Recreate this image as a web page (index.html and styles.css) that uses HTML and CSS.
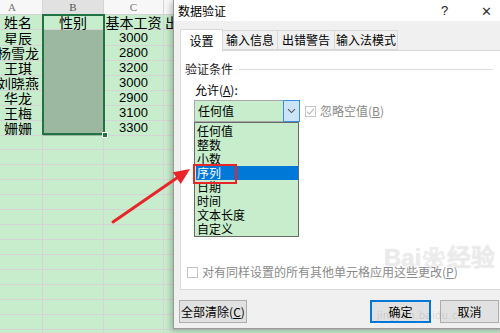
FILE: index.html
```html
<!DOCTYPE html>
<html lang="zh-CN">
<head>
  <meta charset="UTF-8">
  <title>数据验证</title>
  <link rel="stylesheet" href="styles.css">
</head>
<body>
  <div class="sheet">
    <div class="row head">
      <div class="col-a">A</div>
      <div class="col-b picked">B</div>
      <div>C</div>
      <div></div>
    </div>
    <div class="row">
      <div class="name">姓名</div>
      <div class="name">性别</div>
      <div class="name">基本工资</div>
      <div class="name more">出勤</div>
    </div>
    <div class="row"><div class="name">星辰</div><div class="fill"></div><div class="num">3000</div><div></div></div>
    <div class="row"><div class="name">杨雪龙</div><div class="fill"></div><div class="num">2800</div><div></div></div>
    <div class="row"><div class="name">王琪</div><div class="fill"></div><div class="num">3200</div><div></div></div>
    <div class="row"><div class="name">刘晓燕</div><div class="fill"></div><div class="num">3000</div><div></div></div>
    <div class="row"><div class="name">华龙</div><div class="fill"></div><div class="num">2900</div><div></div></div>
    <div class="row"><div class="name">王梅</div><div class="fill"></div><div class="num">3100</div><div></div></div>
    <div class="row"><div class="name">姗姗</div><div class="fill"></div><div class="num">3300</div><div></div></div>
    <div class="row"><div></div><div></div><div></div><div></div></div>
    <div class="row"><div></div><div></div><div></div><div></div></div>
    <div class="row"><div></div><div></div><div></div><div></div></div>
    <div class="row"><div></div><div></div><div></div><div></div></div>
    <div class="row"><div></div><div></div><div></div><div></div></div>
    <div class="row"><div></div><div></div><div></div><div></div></div>
    <div class="row"><div></div><div></div><div></div><div></div></div>
    <div class="row"><div></div><div></div><div></div><div></div></div>
    <div class="row"><div></div><div></div><div></div><div></div></div>
    <div class="row"><div></div><div></div><div></div><div></div></div>
    <div class="row"><div></div><div></div><div></div><div></div></div>
    <div class="row"><div></div><div></div><div></div><div></div></div>
    <div class="row"><div></div><div></div><div></div><div></div></div>
    <div class="row"><div></div><div></div><div></div><div></div></div>

    <div class="selection"><span class="handle"></span></div>
  </div>

  <div class="dialog">
    <div class="titlebar">
      <span class="title">数据验证</span>
      <span class="help">?</span>
      <span class="close">✕</span>
    </div>

    <div class="dialog-body">
      <div class="tabs">
        <div class="tab active">设置</div>
        <div class="tab w55">输入信息</div>
        <div class="tab w57">出错警告</div>
        <div class="tab w63">输入法模式</div>
      </div>

      <div class="panel">
        <div class="group">验证条件</div>
        <div class="label">允许(<u>A</u>):</div>
        <div class="allow-row">
          <div class="combo">
            <span class="combo-value">任何值</span>
            <span class="combo-btn">
              <svg width="9" height="6" viewBox="0 0 9 6"><path d="M1 1.2 L4.5 4.6 L8 1.2" fill="none" stroke="#555" stroke-width="1.1"/></svg>
            </span>
            <ul class="options">
              <li>任何值</li>
              <li>整数</li>
              <li>小数</li>
              <li class="current">序列</li>
              <li>日期</li>
              <li>时间</li>
              <li>文本长度</li>
              <li>自定义</li>
              <span class="mark"></span>
            </ul>
          </div>
          <label class="check muted">
            <span class="box">
              <svg width="9" height="9" viewBox="0 0 9 9"><path d="M1 4.6 L3.5 7 L8 1.6" fill="none" stroke="#b5b5b5" stroke-width="1.1"/></svg>
            </span>
            <span>忽略空值(<u>B</u>)</span>
          </label>
        </div>

        <label class="check muted apply">
          <span class="box"></span>
          <span>对有同样设置的所有其他单元格应用这些更改(<u>P</u>)</span>
        </label>
      </div>

      <div class="buttons">
        <button class="btn clear">全部清除(<u>C</u>)</button>
        <button class="btn ok">确定</button>
        <button class="btn">取消</button>
      </div>
    </div>

    <div class="watermark">Bai<span class="paw">❀</span>经验</div>
    <div class="watermark-url">jingyan.baidu.com</div>
  </div>

  <svg class="arrow" width="500" height="333" viewBox="0 0 500 333">
    <line x1="113" y1="222" x2="179" y2="176.5" stroke="#e8262a" stroke-width="3" stroke-linecap="round"/>
    <polygon points="190,169 180.8,183.9 172.8,172.3" fill="#e8262a"/>
  </svg>
</body>
</html>
```

FILE: styles.css
```css
html {
  box-sizing: border-box;
}
*, *::before, *::after {
  box-sizing: inherit;
}

body {
  margin: 0;
  width: 500px;
  height: 333px;
  overflow: hidden;
  position: relative;
  background: #c7edcc;
  font-family: "Noto Sans CJK SC", "Noto Sans", sans-serif;
  color: #000;
}

/* spreadsheet */
.sheet {
  position: relative;
}
.row {
  display: grid;
  grid-template-columns: 43px 61px 60px 1fr;
  height: 15px;
}
.row > div {
  border-right: 1px solid #d6d3d6;
  border-bottom: 1px solid #d6d3d6;
  display: flex;
  justify-content: center;
  align-items: center;
  white-space: nowrap;
}
.row > div:first-child {
  overflow: hidden;
}
.head > div {
  background: #f7f7f7;
  color: #777;
  font-family: "Liberation Serif", serif;
  font-size: 11px;
  border-color: #d4d4d4;
}
.head .col-a {
  padding-right: 18px;
}
.head .picked {
  background: #e1e1e1;
  color: #555;
}
.name {
  font-size: 14px;
  line-height: 14px;
  padding-right: 6px;
}
.row > .name:nth-child(2),
.row > .name:nth-child(3) {
  padding-right: 0;
}
.row > .more {
  justify-content: flex-start;
  padding-left: 1px;
}
.num {
  font-family: "Liberation Sans", sans-serif;
  font-size: 13px;
}
.row > .fill {
  background: #9db8a0;
  border-right-color: #9db8a0;
  border-bottom-color: #9db8a0;
}
.selection {
  position: absolute;
  left: 42px;
  top: 14px;
  width: 63px;
  height: 121px;
  border: 2px solid #217346;
}
.handle {
  position: absolute;
  right: -5px;
  bottom: -5px;
  width: 6px;
  height: 6px;
  background: #217346;
  border: 1px solid #fff;
}

/* dialog */
.dialog {
  position: absolute;
  left: 173px;
  top: 0;
  width: 332px;
  height: 329px;
  background: #f0f0f0;
  border-left: 1px solid #9a9a9a;
  border-bottom: 1px solid #9a9a9a;
  box-shadow: -2px 2px 6px rgba(0, 0, 0, 0.25);
  font-size: 12px;
  line-height: 16px;
}
.titlebar {
  height: 21px;
  background: #fff;
  display: flex;
  align-items: center;
  padding-left: 4px;
}
.title {
  flex: 1;
}
.help {
  font-family: "Liberation Sans", sans-serif;
  font-size: 13px;
  width: 40px;
  color: #222;
}
.close {
  font-size: 13px;
  width: 24px;
  color: #333;
}
.dialog-body {
  padding: 7px 0 0 6px;
}
.tabs {
  display: flex;
  align-items: flex-end;
  height: 23px;
  position: relative;
  z-index: 1;
}
.tab {
  height: 20px;
  border: 1px solid #d9d9d9;
  border-left: none;
  background: #f0f0f0;
  display: flex;
  align-items: center;
  justify-content: center;
  margin-bottom: 1px;
}
.tab.active {
  width: 43px;
  height: 23px;
  background: #fff;
  border-left: 1px solid #d9d9d9;
  border-bottom: none;
  margin-bottom: -1px;
}
.w55 { width: 55px; }
.w57 { width: 57px; }
.w63 { width: 63px; }

.panel {
  width: 325px;
  height: 240px;
  margin-top: -1px;
  background: #fff;
  border: 1px solid #d9d9d9;
  padding: 10px 0 9px 4px;
  display: flex;
  flex-direction: column;
}
.group {
  display: flex;
  align-items: center;
  color: #1e1e1e;
}
.group::after {
  content: "";
  flex: 1;
  height: 1px;
  background: #dcdcdc;
  margin: 0 11px 0 6px;
}
.label {
  margin: 5px 0 0 10px;
}
u {
  text-decoration: underline;
  text-underline-offset: 1px;
}
.allow-row {
  display: flex;
  align-items: center;
  margin: 2px 0 0 9px;
}
.combo {
  position: relative;
  display: flex;
  width: 106px;
  height: 22px;
}
.combo-value {
  flex: 1;
  background: #c7edcc;
  border: 1px solid #a8a8a8;
  border-right: none;
  padding-left: 3px;
  display: flex;
  align-items: center;
}
.combo-btn {
  width: 17px;
  background: #cce4f7;
  border: 1px solid #3c8fe0;
  display: flex;
  align-items: center;
  justify-content: center;
}
.options {
  position: absolute;
  left: 0;
  top: 22px;
  width: 105px;
  margin: 0;
  padding: 1px 0 0;
  list-style: none;
  background: #c7edcc;
  border: 1px solid #6a6a6a;
  z-index: 2;
}
.options li {
  height: 14px;
  line-height: 14px;
  padding-left: 2px;
}
.options li.current {
  background: #0078d7;
  color: #fff;
  margin-left: 1px;
  padding-left: 1px;
}
.mark {
  position: absolute;
  left: -2px;
  top: 41px;
  width: 44px;
  height: 20px;
  border: 2px solid #e8262a;
}
.check {
  display: flex;
  align-items: center;
  gap: 4px;
}
.muted {
  color: #8a8a8a;
}
.box {
  width: 11px;
  height: 11px;
  border: 1px solid #c4c4c4;
  background: #fff;
  display: flex;
  align-items: center;
  justify-content: center;
}
.allow-row .check {
  margin-left: 5px;
}
.apply {
  margin: auto 0 0 2px;
}

.buttons {
  display: flex;
  margin: 10px 0 0 -1px;
}
.btn {
  font: inherit;
  height: 23px;
  width: 59px;
  padding: 0;
  background: #e1e1e1;
  border: 1px solid #adadad;
  color: #000;
}
.btn.clear {
  width: 68px;
  margin-right: auto;
}
.btn.ok {
  width: 61px;
  border: 2px solid #0078d7;
  margin-right: 9px;
}
.buttons .btn:last-child {
  margin-right: 6px;
}

.watermark {
  position: absolute;
  left: 210px;
  top: 244px;
  font-family: "Liberation Sans", sans-serif;
  font-size: 24px;
  font-weight: bold;
  line-height: 28px;
  color: rgba(255, 255, 255, 0.55);
  text-shadow: 0 0 1px rgba(0, 0, 0, 0.18);
  pointer-events: none;
}
.paw {
  font-size: 22px;
  margin: 0 2px;
}
.watermark-url {
  position: absolute;
  left: 203px;
  top: 307px;
  font-family: "Liberation Sans", sans-serif;
  font-size: 11px;
  color: rgba(0, 0, 0, 0.12);
  letter-spacing: 0.5px;
}

.arrow {
  position: absolute;
  left: 0;
  top: 0;
  pointer-events: none;
}
```
